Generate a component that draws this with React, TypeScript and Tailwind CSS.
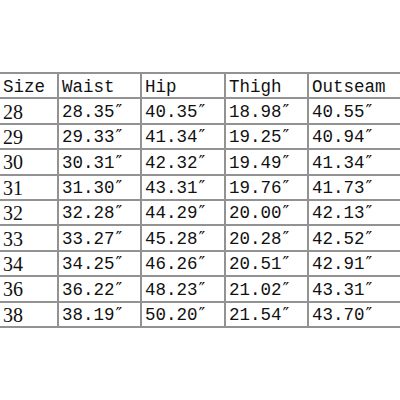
const head = ["Size", "Waist", "Hip", "Thigh", "Outseam"];

const rows: [string, string, string, string, string][] = [
  ["28", "28.35", "40.35", "18.98", "40.55"],
  ["29", "29.33", "41.34", "19.25", "40.94"],
  ["30", "30.31", "42.32", "19.49", "41.34"],
  ["31", "31.30", "43.31", "19.76", "41.73"],
  ["32", "32.28", "44.29", "20.00", "42.13"],
  ["33", "33.27", "45.28", "20.28", "42.52"],
  ["34", "34.25", "46.26", "20.51", "42.91"],
  ["36", "36.22", "48.23", "21.02", "43.31"],
  ["38", "38.19", "50.20", "21.54", "43.70"],
];

const mono = "font-['Liberation_Mono','Noto_Sans_CJK_SC',monospace]";

export default function App() {
  return (
    <div className="w-[400px] h-[400px] bg-white overflow-hidden text-[#111]">
      <div className="pt-[72px]">
        <table className="border-collapse table-fixed w-[400px]">
          <colgroup>
            <col className="w-[58px]" />
            <col className="w-[83px]" />
            <col className="w-[84px]" />
            <col className="w-[83px]" />
            <col />
          </colgroup>
          <thead>
            <tr className="h-[25.4px]">
              {head.map((h, i) => (
                <th
                  key={h}
                  className={`border-y-2 border-[#929292] text-left font-normal text-[17.5px] leading-none pl-[3px] pt-[4px] ${mono} ${
                    i > 0 ? "border-l-2" : ""
                  }`}
                >
                  {h}
                </th>
              ))}
            </tr>
          </thead>
          <tbody>
            {rows.map((r) => (
              <tr key={r[0]} className="h-[25.4px]">
                <td className="border-y-2 border-[#929292] pl-[3px] pt-[1px] text-[20px] leading-none font-['Liberation_Serif',serif]">
                  {r[0]}
                </td>
                {r.slice(1).map((v, i) => (
                  <td
                    key={i}
                    className={`border-y-2 border-l-2 border-[#929292] pl-[3px] pt-[1px] text-[17.5px] leading-none whitespace-nowrap ${mono}`}
                  >
                    {v}
                    <span className="font-['DejaVu_Sans',sans-serif] text-[18px] ml-[1px]">″</span>
                  </td>
                ))}
              </tr>
            ))}
          </tbody>
        </table>
      </div>
    </div>
  );
}
